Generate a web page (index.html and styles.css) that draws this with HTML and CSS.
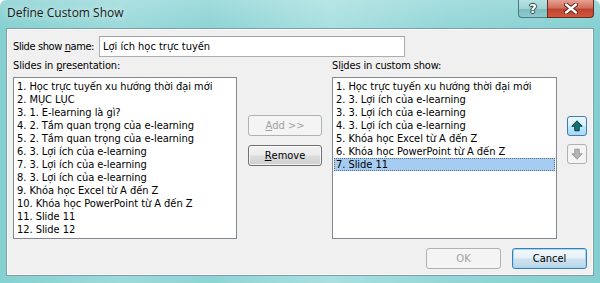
FILE: index.html
```html
<!DOCTYPE html>
<html>
<head>
<meta charset="utf-8">
<link rel="stylesheet" href="styles.css">
</head>
<body>
<div class="window">
  <div class="titlebar">
    <span class="title">Define Custom Show</span>
    <div class="caption-btns">
      <div class="cap-btn help"><span class="glyph">?</span></div>
      <div class="cap-btn close">
        <svg width="14" height="11" viewBox="0 0 14 11">
          <path d="M2 1.5 L12 9.5 M12 1.5 L2 9.5" stroke="#5a1a12" stroke-width="4.2" stroke-linecap="round" fill="none"/>
          <path d="M2 1.5 L12 9.5 M12 1.5 L2 9.5" stroke="#ffffff" stroke-width="2.4" stroke-linecap="round" fill="none"/>
        </svg>
      </div>
    </div>
  </div>
  <div class="client">
    <div class="name-row">
      <span class="lbl name-lbl">Slide show <u>n</u>ame:</span>
      <div class="input">Lợi ích học trực tuyến</div>
    </div>
    <div class="main">
      <div class="col col-left">
        <div class="lbl col-lbl">Slides in <u>p</u>resentation:</div>
        <div class="list">
          <div class="item">1. Học trực tuyến xu hướng thời đại mới</div>
          <div class="item">2. MỤC LỤC</div>
          <div class="item">3. 1. E-learning là gì?</div>
          <div class="item">4. 2. Tầm quan trọng của e-learning</div>
          <div class="item">5. 2. Tầm quan trọng của e-learning</div>
          <div class="item">6. 3. Lợi ích của e-learning</div>
          <div class="item">7. 3. Lợi ích của e-learning</div>
          <div class="item">8. 3. Lợi ích của e-learning</div>
          <div class="item">9. Khóa học Excel từ A đến Z</div>
          <div class="item">10. Khóa học PowerPoint từ A đến Z</div>
          <div class="item">11. Slide 11</div>
          <div class="item">12. Slide 12</div>
        </div>
      </div>
      <div class="mid">
        <div class="btn disabled"><u>A</u>dd &gt;&gt;</div>
        <div class="btn"><u>R</u>emove</div>
      </div>
      <div class="col col-right">
        <div class="lbl col-lbl">Sl<u>i</u>des in custom show:</div>
        <div class="list">
          <div class="item">1. Học trực tuyến xu hướng thời đại mới</div>
          <div class="item">2. 3. Lợi ích của e-learning</div>
          <div class="item">3. 3. Lợi ích của e-learning</div>
          <div class="item">4. 3. Lợi ích của e-learning</div>
          <div class="item">5. Khóa học Excel từ A đến Z</div>
          <div class="item">6. Khóa học PowerPoint từ A đến Z</div>
          <div class="item selected">7. Slide 11</div>
        </div>
      </div>
      <div class="arrows">
        <div class="arrow-btn active">
          <svg width="12" height="12" viewBox="0 0 12 12">
            <path d="M6 0.8 L11.2 6.2 L8.2 6.2 L8.2 10.8 L3.8 10.8 L3.8 6.2 L0.8 6.2 Z" fill="#0f7478" stroke="#0b3d40" stroke-width="1" stroke-linejoin="round"/>
          </svg>
        </div>
        <div class="arrow-btn off">
          <svg width="12" height="12" viewBox="0 0 12 12">
            <path d="M6 11.2 L11.2 5.8 L8.2 5.8 L8.2 1.2 L3.8 1.2 L3.8 5.8 L0.8 5.8 Z" fill="#b4b4b4" stroke="#9a9a9a" stroke-width="1" stroke-linejoin="round"/>
          </svg>
        </div>
      </div>
    </div>
    <div class="footer">
      <div class="btn disabled">OK</div>
      <div class="btn default">Cancel</div>
    </div>
  </div>
</div>
</body>
</html>
```

FILE: styles.css
```css
html, body {
  margin: 0;
  padding: 0;
  width: 600px;
  height: 283px;
  overflow: hidden;
}

.window {
  width: 600px;
  height: 283px;
  box-sizing: border-box;
  padding: 0 6px 8px 6px;
  display: flex;
  flex-direction: column;
  background:
    linear-gradient(180deg, rgba(255,255,255,0.18) 0px, rgba(255,255,255,0) 28px),
    linear-gradient(90deg, #86d0d2 0%, #9cdadb 20%, #8ed4d5 35%, #a9e0e0 55%, #93d6d7 75%, #86cfd1 100%);
  border-radius: 6px 6px 0 0;
  font-family: "DejaVu Sans Condensed", "DejaVu Sans", sans-serif;
}

.titlebar {
  height: 28px;
  flex: none;
  display: flex;
  justify-content: space-between;
  align-items: flex-start;
}

.title {
  font-family: "Open Sans", "Noto Sans", sans-serif;
  font-size: 12px;
  line-height: 16px;
  color: #1a1a1a;
  padding: 5px 0 0 1px;
  text-shadow: 0 0 6px rgba(255,255,255,0.8);
}

.caption-btns {
  display: flex;
}

.cap-btn {
  height: 18px;
  box-sizing: border-box;
  display: flex;
  align-items: center;
  justify-content: center;
  border: 1px solid #4c7a7e;
  border-top: none;
}

.help {
  width: 29px;
  border-radius: 0 0 0 4px;
  border-right: none;
  background: linear-gradient(180deg, #b6e2e3 0%, #9fd3d5 50%, #7cbcbf 51%, #8dcbcd 100%);
}

.help .glyph {
  font-family: "DejaVu Sans", sans-serif;
  font-weight: bold;
  font-size: 13px;
  line-height: 13px;
  color: #ffffff;
  text-shadow: 0 0 1px #2d4b4e, 0 0 1px #2d4b4e, 1px 0 0 #2d4b4e, -1px 0 0 #2d4b4e, 0 1px 0 #2d4b4e, 0 -1px 0 #2d4b4e;
}

.close {
  width: 47px;
  border-radius: 0 0 4px 0;
  border-color: #6b2a20;
  background: linear-gradient(180deg, #e6a193 0%, #d27060 45%, #c04530 55%, #d0563d 100%);
}

.client {
  flex: 1;
  background: #f0f0f0;
  border: 1px solid #7e9fa3;
  box-shadow: inset 0 0 0 1px #fbfbfb;
  padding: 7px 6px 6px 6px;
  display: flex;
  flex-direction: column;
  font-size: 11px;
  color: #000;
}

.lbl {
  font-size: 11px;
  line-height: 13px;
  white-space: nowrap;
  letter-spacing: -0.15px;
}

.name-row {
  display: flex;
  align-items: center;
  height: 21px;
}

.name-lbl {
  width: 86px;
  flex: none;
  letter-spacing: -0.4px;
}

.input {
  width: 306px;
  height: 21px;
  box-sizing: border-box;
  background: #fff;
  border: 1px solid #abadb3;
  border-top-color: #a0a3a8;
  padding: 3px 0 0 3px;
  font-size: 11px;
  line-height: 13px;
}

.main {
  display: flex;
  margin-top: 2px;
}

.col {
  display: flex;
  flex-direction: column;
}

.col-left {
  width: 224px;
}

.col-right {
  width: 225px;
  margin-left: 10px;
}

.col-lbl {
  margin-bottom: 5px;
}

.list {
  height: 162px;
  box-sizing: border-box;
  background: #fff;
  border: 1px solid #828790;
  padding: 2px 1px 0 1px;
}

.item {
  height: 13px;
  line-height: 13px;
  padding-left: 2px;
  font-size: 11px;
  white-space: nowrap;
  box-sizing: border-box;
  letter-spacing: -0.05px;
}

.item.selected {
  background: #a6cdf1;
  outline: 1px dotted #5b6f80;
  outline-offset: -1px;
}

.mid {
  width: 74px;
  margin-left: 11px;
  display: flex;
  flex-direction: column;
  gap: 9px;
  padding-top: 56px;
}

.btn {
  width: 74px;
  height: 21px;
  box-sizing: border-box;
  border: 1px solid #707070;
  border-radius: 3px;
  background: linear-gradient(180deg, #f2f2f2 0%, #ebebeb 48%, #dddddd 52%, #cfcfcf 100%);
  box-shadow: inset 0 0 0 1px rgba(255,255,255,0.7);
  display: flex;
  align-items: center;
  justify-content: center;
  font-size: 11px;
  line-height: 13px;
  color: #000;
}

.btn.disabled {
  border-color: #adb2b5;
  background: #f4f4f4;
  color: #a0a0a0;
  box-shadow: none;
}

.btn.default {
  border-color: #3c7fb1;
  background: linear-gradient(180deg, #f4fafd 0%, #e3eff7 48%, #cfe3f0 52%, #bcd6e8 100%);
  box-shadow: inset 0 0 0 1px #9fd7f5;
}

.arrows {
  width: 20px;
  margin-left: 10px;
  display: flex;
  flex-direction: column;
  gap: 8px;
  padding-top: 57px;
}

.arrow-btn {
  width: 20px;
  height: 20px;
  box-sizing: border-box;
  border-radius: 3px;
  display: flex;
  align-items: center;
  justify-content: center;
}

.arrow-btn.active {
  border: 1px solid #3c7fb1;
  background: linear-gradient(180deg, #eaf6fd 0%, #d9f0fc 48%, #bee6fd 52%, #a7d9f5 100%);
}

.arrow-btn.off {
  border: 1px solid #adb2b5;
  background: #f4f4f4;
}

.footer {
  display: flex;
  justify-content: flex-end;
  gap: 11px;
  margin-top: 9px;
}

.footer .btn {
  width: 75px;
}
```
